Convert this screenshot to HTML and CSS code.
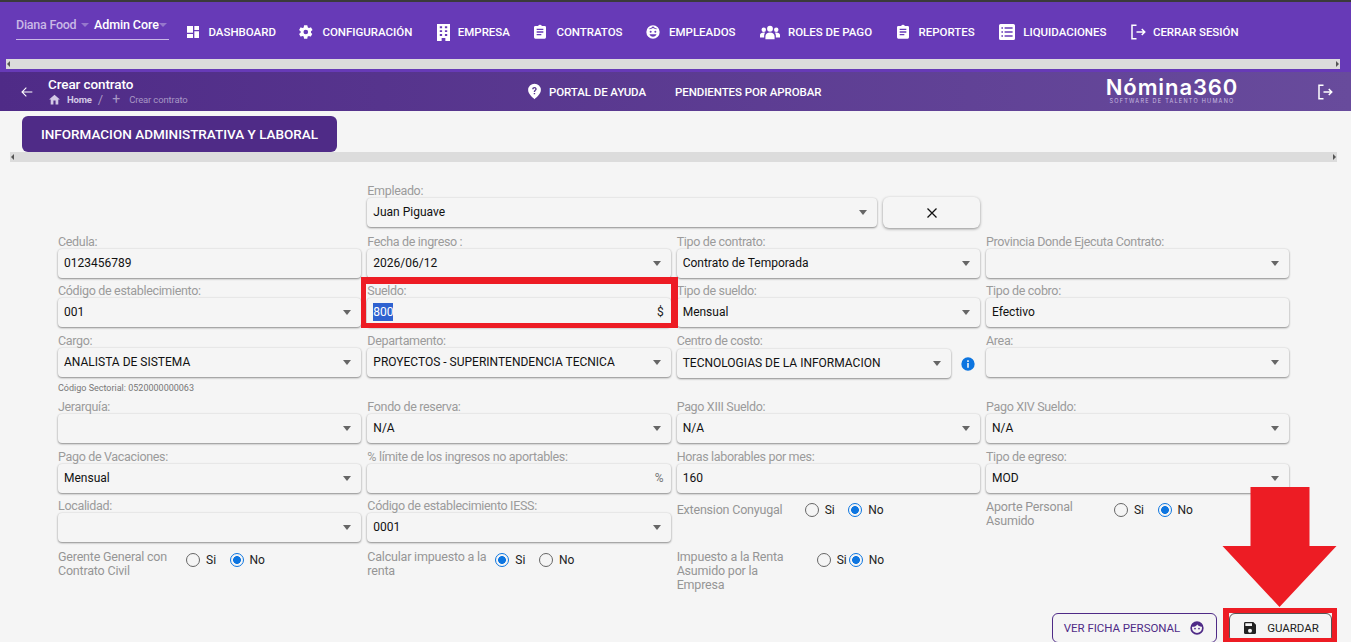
FILE: index.html
```html
<!DOCTYPE html>
<html lang="es">
<head>
<meta charset="utf-8">
<title>Crear contrato</title>
<link rel="stylesheet" href="styles.css">
</head>
<body>
<header class="topbar">
  <nav class="topnav">
    <div class="company">
      <span class="company-a">Diana Food <i class="caret caret-dim"></i></span>
      <span class="company-b">Admin Core<i class="caret caret-dim tight"></i></span>
    </div>
    <a class="navitem"><svg viewBox="0 0 24 24" class="ic"><path d="M3 3h9v10H3zM14 3h7v6h-7zM14 11h7v10h-7zM3 15h9v6H3z"/></svg>DASHBOARD</a>
    <a class="navitem"><svg viewBox="0 0 24 24" class="ic"><path d="M19.4 13c.1-.3.1-.7.1-1s0-.7-.1-1l2.100-1.600c.2-.2.2-.4.1-.6l-2-3.500c-.1-.2-.4-.3-.6-.2l-2.500 1c-.5-.4-1.100-.7-1.700-1L14 2.400c0-.2-.2-.4-.5-.4h-4c-.2 0-.4.2-.5.400l-.4 2.700c-.6.2-1.100.6-1.700 1l-2.500-1c-.2-.1-.5 0-.6.2l-2 3.500c-.1.2-.1.4.1.600L4 11c0 .3-.1.700-.1 1s0 .7.1 1l-2.100 1.600c-.2.2-.2.4-.1.6l2 3.500c.1.2.4.3.6.2l2.500-1c.5.4 1.100.7 1.700 1l.4 2.700c0 .2.2.4.5.4h4c.2 0 .4-.2.5-.4l.4-2.700c.6-.2 1.100-.6 1.700-1l2.500 1c.2.1.5 0 .6-.2l2-3.500c.1-.2.1-.4-.1-.6zM11.700 15.500a3.500 3.500 0 1 1 0-7 3.500 3.500 0 0 1 0 7z"/></svg>CONFIGURACIÓN</a>
    <a class="navitem"><svg viewBox="5 1 14 22" preserveAspectRatio="none" class="ic ic-tall"><path fill-rule="evenodd" d="M5 1h14v22h-5v-4h-4v4H5zM8 4v2.500h2.500V4zM13.500 4v2.500H16V4zM8 9v2.500h2.500V9zM13.500 9v2.500H16V9zM8 14v2.500h2.500V14zM13.500 14v2.500H16V14z"/></svg>EMPRESA</a>
    <a class="navitem"><svg viewBox="0 0 24 24" class="ic"><path fill-rule="evenodd" d="M5 3h4.200a3 3 0 0 1 5.600 0H19a2 2 0 0 1 2 2v15a2 2 0 0 1-2 2H5a2 2 0 0 1-2-2V5a2 2 0 0 1 2-2zM7 7v2h10V7zM7 11v2h10v-2zM7 15v2h7v-2z"/></svg>CONTRATOS</a>
    <a class="navitem"><svg viewBox="0 0 24 24" class="ic"><path fill-rule="evenodd" d="M12 2a10 10 0 1 0 0 20 10 10 0 0 0 0-20zM8.500 10a1.500 1.500 0 1 1 0 3 1.500 1.500 0 0 1 0-3zM15.500 10a1.500 1.500 0 1 1 0 3 1.500 1.500 0 0 1 0-3zM12 19c-2.500 0-4.500-1.500-5.300-3.500h10.600C16.500 17.500 14.500 19 12 19zM12 3.500c2 2 4 3.500 7 4-3 .5-5 0-7-1.500-2 1.500-4 2-7 1.500 3-.5 5-2 7-4z"/></svg>EMPLEADOS</a>
    <a class="navitem"><svg viewBox="0 3 24 18" class="ic ic-wide"><path d="M12 4a3.500 3.500 0 1 1 0 7 3.500 3.500 0 0 1 0-7zM4.500 6a2.700 2.700 0 1 1 0 5.400 2.700 2.700 0 0 1 0-5.400zM19.500 6a2.700 2.700 0 1 1 0 5.400 2.700 2.700 0 0 1 0-5.400zM6.500 20v-3.500c0-2.500 2.500-4.500 5.500-4.500s5.500 2 5.500 4.500V20zM0 18v-3c0-1.700 1.800-3 4.500-3 .6 0 1.100.1 1.600.2-.7 1-1.100 2.100-1.100 3.300V18zM24 18v-3c0-1.700-1.800-3-4.500-3-.6 0-1.100.1-1.600.2.700 1 1.100 2.100 1.100 3.300V18z"/></svg>ROLES DE PAGO</a>
    <a class="navitem"><svg viewBox="0 0 24 24" class="ic"><path fill-rule="evenodd" d="M5 3h4.200a3 3 0 0 1 5.600 0H19a2 2 0 0 1 2 2v15a2 2 0 0 1-2 2H5a2 2 0 0 1-2-2V5a2 2 0 0 1 2-2zM7 7v2h10V7zM7 11v2h10v-2zM7 15v2h7v-2z"/></svg>REPORTES</a>
    <a class="navitem"><svg viewBox="2 2 20 20" class="ic ic-list"><path fill-rule="evenodd" d="M4 2h16a2 2 0 0 1 2 2v16a2 2 0 0 1-2 2H4a2 2 0 0 1-2-2V4a2 2 0 0 1 2-2zM5 6v2h2V6zM9 6v2h10V6zM5 11v2h2v-2zM9 11v2h10v-2zM5 16v2h2v-2zM9 16v2h10v-2z"/></svg>LIQUIDACIONES</a>
    <a class="navitem"><svg viewBox="0 0 24 24" class="ic ic-line ic-out"><path d="M10 3H4v18h6M10 12h11M17 8l4 4-4 4"/></svg>CERRAR SESIÓN</a>
  </nav>
  <div class="hscroll hscroll-top"><i class="arr arr-l"></i><i class="arr arr-r"></i></div>
</header>

<section class="subbar">
  <svg viewBox="0 0 24 24" class="back"><path d="M20 12H5M11 5.500L4.500 12l6.500 6.500"/></svg>
  <div class="crumbs">
    <div class="crumb-title">Crear contrato</div>
    <div class="crumb-path">
      <svg viewBox="0 0 24 24" class="home"><path d="M10 21v-7h4v7h5v-9h3L12 3 2 12h3v9z"/></svg>
      <b>Home</b><span class="sep">/</span><span class="plus">+</span><span class="cur">Crear contrato</span>
    </div>
  </div>
  <div class="sublinks">
    <a class="sublink"><svg viewBox="0 0 24 24" class="help"><path fill-rule="evenodd" d="M12 1a9 9 0 0 0-9 9c0 5.500 6 10 9 13 3-3 9-7.500 9-13a9 9 0 0 0-9-9zM12.900 16h-2v-2h2zM14.800 9.800c-.5.700-1.900 1.300-1.900 3h-2c0-2.500 2-3 2.200-4 .1-.7-.4-1.300-1.100-1.300-.7 0-1.200.5-1.300 1.200H8.700C8.800 7 10.100 5.700 12 5.700c2.300 0 3.800 2.200 2.800 4.100z"/></svg>PORTAL DE AYUDA</a>
    <a class="sublink">PENDIENTES POR APROBAR</a>
  </div>
  <div class="logo">
    <div class="logo-main">Nómina360</div>
    <div class="logo-sub">SOFTWARE DE TALENTO HUMANO</div>
  </div>
  <svg viewBox="0 0 24 24" class="ic-line exit"><path d="M10 3H4v18h6M10 12h11M17 8l4 4-4 4"/></svg>
</section>

<main class="content">
  <div class="tab">INFORMACION ADMINISTRATIVA Y LABORAL</div>
  <div class="hscroll hscroll-tab"><i class="arr arr-l"></i><i class="arr arr-r"></i></div>

  <form class="form">
    <div class="cell"></div>
    <div class="cell cell-wide"><label>Empleado:</label>
      <div class="with-btn">
        <div class="ctl"><span>Juan Piguave</span><i class="sel"></i></div>
        <button type="button" class="xbtn"><svg viewBox="0 0 24 24"><path d="M6 6l12 12M18 6L6 18"/></svg></button>
      </div>
    </div>
    <div class="cell"></div>

    <div class="cell"><label>Cedula:</label><div class="ctl"><span>0123456789</span></div></div>
    <div class="cell"><label>Fecha de ingreso :</label><div class="ctl"><span>2026/06/12</span><i class="sel"></i></div></div>
    <div class="cell"><label>Tipo de contrato:</label><div class="ctl"><span>Contrato de Temporada</span><i class="sel"></i></div></div>
    <div class="cell"><label>Provincia Donde Ejecuta Contrato:</label><div class="ctl"><span></span><i class="sel"></i></div></div>

    <div class="cell"><label>Código de establecimiento:</label><div class="ctl"><span>001</span><i class="sel"></i></div></div>
    <div class="cell"><label>Sueldo:</label><div class="ctl"><span class="picked">800</span><em class="suffix">$</em></div></div>
    <div class="cell"><label>Tipo de sueldo:</label><div class="ctl"><span>Mensual</span><i class="sel"></i></div></div>
    <div class="cell"><label>Tipo de cobro:</label><div class="ctl"><span>Efectivo</span></div></div>

    <div class="cell"><label>Cargo:</label><div class="ctl"><span>ANALISTA DE SISTEMA</span><i class="sel"></i></div><small>Código Sectorial: 0520000000063</small></div>
    <div class="cell"><label>Departamento:</label><div class="ctl"><span>PROYECTOS - SUPERINTENDENCIA TECNICA</span><i class="sel"></i></div></div>
    <div class="cell"><label>Centro de costo:</label>
      <div class="with-info">
        <div class="ctl"><span>TECNOLOGIAS DE LA INFORMACION</span><i class="sel"></i></div>
        <svg viewBox="0 0 24 24" class="info"><path fill-rule="evenodd" d="M12 2a10 10 0 1 0 0 20 10 10 0 0 0 0-20zM13.200 17.500h-2.400v-7h2.400zM13.200 9h-2.400V6.500h2.400z"/></svg>
      </div>
    </div>
    <div class="cell"><label>Area:</label><div class="ctl"><span></span><i class="sel"></i></div></div>

    <div class="cell"><label>Jerarquía:</label><div class="ctl"><span></span><i class="sel"></i></div></div>
    <div class="cell"><label>Fondo de reserva:</label><div class="ctl"><span>N/A</span><i class="sel"></i></div></div>
    <div class="cell"><label>Pago XIII Sueldo:</label><div class="ctl"><span>N/A</span><i class="sel"></i></div></div>
    <div class="cell"><label>Pago XIV Sueldo:</label><div class="ctl"><span>N/A</span><i class="sel"></i></div></div>

    <div class="cell"><label>Pago de Vacaciones:</label><div class="ctl"><span>Mensual</span><i class="sel"></i></div></div>
    <div class="cell"><label>% límite de los ingresos no aportables:</label><div class="ctl"><span></span><em class="suffix dim">%</em></div></div>
    <div class="cell"><label>Horas laborables por mes:</label><div class="ctl"><span>160</span></div></div>
    <div class="cell"><label>Tipo de egreso:</label><div class="ctl"><span>MOD</span><i class="sel"></i></div></div>

    <div class="cell"><label>Localidad:</label><div class="ctl"><span></span><i class="sel"></i></div></div>
    <div class="cell"><label>Código de establecimiento IESS:</label><div class="ctl"><span>0001</span><i class="sel"></i></div></div>
    <div class="cell radio-cell r-ext">
      <div class="rlabel r128 single">Extension Conyugal</div>
      <div class="radios"><span class="rd"></span><span class="rt">Si</span><span class="rd on"></span><span class="rt">No</span></div>
    </div>
    <div class="cell radio-cell r-ext">
      <div class="rlabel r128 nudge">Aporte Personal Asumido</div>
      <div class="radios"><span class="rd"></span><span class="rt">Si</span><span class="rd on"></span><span class="rt">No</span></div>
    </div>

    <div class="cell radio-cell">
      <div class="rlabel r128">Gerente General con Contrato Civil</div>
      <div class="radios"><span class="rd"></span><span class="rt">Si</span><span class="rd on"></span><span class="rt">No</span></div>
    </div>
    <div class="cell radio-cell">
      <div class="rlabel r128">Calcular impuesto a la renta</div>
      <div class="radios"><span class="rd on"></span><span class="rt">Si</span><span class="rd"></span><span class="rt">No</span></div>
    </div>
    <div class="cell radio-cell">
      <div class="rlabel r140">Impuesto a la Renta Asumido por la Empresa</div>
      <div class="radios"><span class="rd"></span><span class="rt tightrt">Si</span><span class="rd on"></span><span class="rt">No</span></div>
    </div>
    <div class="cell"></div>
  </form>

  <div class="actions">
    <button type="button" class="btn btn-ficha">VER FICHA PERSONAL
      <svg viewBox="0 0 24 24" class="face"><path fill-rule="evenodd" d="M12 2a10 10 0 1 0 0 20 10 10 0 0 0 0-20zM12 19.500A7.500 7.500 0 0 1 4.500 12c0-.7.100-1.300.3-1.900 3.500.2 6-1 7.700-3.400 1.400 2 3.500 3.200 6.700 3.400.2.600.3 1.200.3 1.900a7.500 7.500 0 0 1-7.500 7.500zM9 11.500a1.300 1.300 0 1 1 0 2.600 1.300 1.300 0 0 1 0-2.600zM15 11.500a1.300 1.300 0 1 1 0 2.600 1.300 1.300 0 0 1 0-2.600z"/></svg>
    </button>
    <button type="button" class="btn btn-save">
      <svg viewBox="0 0 24 24" class="disk"><path fill-rule="evenodd" d="M17 3H5a2 2 0 0 0-2 2v14a2 2 0 0 0 2 2h14a2 2 0 0 0 2-2V7zM12 19a3 3 0 1 1 0-6 3 3 0 0 1 0 6zM15 9H5V5h10z"/></svg>GUARDAR</button>
  </div>
</main>

<div class="mark mark-sueldo"></div>
<div class="mark mark-save"></div>
<svg class="arrow" viewBox="0 0 114 120"><path d="M28 0h59v59h27L57 120 0 59h28z"/></svg>
</body>
</html>
```
FILE: styles.css
```css
* { box-sizing: border-box; }
html, body { margin: 0; height: 642px; overflow: hidden; }
body { background: #f5f5f5; font-family: Roboto, "Liberation Sans", sans-serif; color: #111; }

.topbar { height: 72px; background: #673ab7; border-top: 2px solid #3a3a3a; }
.topnav { height: 57px; display: flex; align-items: flex-start; padding: 14px 0 0 16px; color: #fff; }
.company { display: flex; width: 153px; height: 24px; border-bottom: 1px solid #c9b8e6; font-size: 12.5px; font-weight: 500; line-height: 17px; margin-right: 17.500px; }
.company-a { width: 78px; color: #c9b8e6; letter-spacing: -.25px; white-space: nowrap; }
.company-b { color: #fff; white-space: nowrap; letter-spacing: -.1px; }
.caret { display: inline-block; vertical-align: 2px; margin-left: 2px; border: 4.5px solid transparent; border-top: 4px solid #9678cc; border-bottom: 0; }
.caret.tight { margin-left: 0; }
.navitem { display: flex; align-items: center; height: 28px; margin-top: 2px; margin-right: 24.5px; font-size: 11.500px; font-weight: 500; white-space: nowrap; letter-spacing: -.02px; }
.ic { width: 16px; height: 16px; fill: #fff; margin: 0 8px 0 -2px; flex: none; }
.ic-tall { width: 13px; height: 17px; margin: 0 8px 0 0; }
.ic-wide { width: 20px; height: 15px; margin: 0 8px 0 0; }
.ic-list { width: 16px; height: 16px; margin: 0 8px 0 0; }
.ic-out { width: 18px; height: 18px; margin: 0 6px 0 -2px; }
.ic-line { fill: none; stroke: #fff; stroke-width: 2; }
.hscroll { position: relative; height: 10px; background: #dcdcdc; }
.hscroll-top { margin: 0 11px 0 6px; }
.hscroll-tab { margin: 0 14px 0 10px; }
.arr { position: absolute; top: 2px; border: 3px solid transparent; }
.arr-l { left: 1px; border-right: 3px solid #555; border-left: 0; }
.arr-r { right: 1px; border-left: 3px solid #555; border-right: 0; }

.subbar { height: 39px; display: flex; align-items: center; color: #fff; background: linear-gradient(90deg, #4f2b87 0%, #684b9c 100%); }
.back { width: 16px; height: 16px; margin-left: 19px; fill: none; stroke: #fff; stroke-width: 1.6; }
.crumbs { margin-left: 13px; width: 210px; }
.crumb-title { font-size: 13.500px; font-weight: 500; line-height: 16px; margin-top: -1px; letter-spacing: -.1px; }
.crumb-path { display: flex; align-items: center; height: 15px; font-size: 9.500px; color: #a796c4; }
.crumb-path b { color: #d3c8e5; font-weight: 700; margin-left: 6px; letter-spacing: -.15px; }
.home { width: 13px; height: 13px; fill: #d3c8e5; }
.sep { margin: 0 9px 0 6px; font-size: 13px; }
.plus { font-size: 14px; margin-right: 9px; }
.cur { letter-spacing: -.15px; }
.sublinks { display: flex; align-items: center; margin-left: 269px; width: 578px; }
.sublink { display: flex; align-items: center; font-size: 11.500px; font-weight: 500; white-space: nowrap; margin-right: 29px; letter-spacing: -.08px; }
.help { width: 17px; height: 17px; fill: #fff; margin: 0 6px 0 -1px; }
.logo { width: 134px; text-align: center; }
.logo-main { font-family: Inter, sans-serif; font-size: 22px; font-weight: 600; line-height: 20px; letter-spacing: .9px; margin-top: -2px; white-space: nowrap; }
.logo-sub { font-family: Inter, sans-serif; font-size: 5.500px; line-height: 7px; letter-spacing: 1.250px; color: #c9bde0; white-space: nowrap; margin-top: 1px; }
.exit { width: 18px; height: 18px; margin-left: 77px; stroke-width: 2; }

.content { display: block; }
.tab { width: 315px; height: 36px; margin: 5px 0 0 22px; border-radius: 6px; background: #4f2b87; color: #fff; font-size: 13.500px; font-weight: 500; line-height: 37px; text-align: center; }

.form { display: grid; margin: 21px 0 0 58px; grid-template-columns: repeat(4, 303.330px); column-gap: 6px; grid-template-rows: 51px 49px 50px 66px 50px 49px 52px 60px; width: 1232px; }
.cell { min-width: 0; }
.cell-wide { grid-column: span 2; }
.cell label { display: block; height: 15px; font-size: 12.500px; line-height: 15px; color: #9b9b9b; white-space: nowrap; letter-spacing: -.33px; }
.ctl { display: flex; align-items: center; height: 29px; padding: 0 6px 1px; background: #f5f5f5; border-radius: 4px; font-size: 12px; color: #111; box-shadow: 0 1px 2px #8f8f8f, 0 0 2px #d8d8d8; }
.ctl span { flex: 1; white-space: nowrap; }
.sel { flex: none; margin-right: 4px; border: 4px solid transparent; border-top: 5px solid #666; border-bottom: 0; border-left-width: 4.500px; border-right-width: 4.500px; }
.suffix { font-style: normal; font-size: 12px; color: #222; margin-left: auto; margin-right: 1px; }
.suffix.dim { color: #777; }
.ctl .picked { flex: none; width: 20px; height: 18px; line-height: 18px; background: #2f62d0; color: #fff; }
small { display: block; margin-top: 6px; font-size: 9px; line-height: 11px; color: #777; }
.with-btn { display: flex; width: 613px; }
.with-btn .ctl { width: 510px; flex: none; }
.xbtn { width: 97px; height: 31px; margin: -1px 0 0 6px; padding: 0; border: 0; border-radius: 6px; background: #f5f5f5; box-shadow: 0 1px 3px #8f8f8f; }
.xbtn svg { width: 18px; height: 18px; fill: none; stroke: #111; stroke-width: 1.700; vertical-align: middle; }
.with-info { display: flex; align-items: center; margin-top: 1px; }
.with-info .ctl { width: 274px; flex: none; }
.info { width: 16px; height: 16px; margin-left: 9px; fill: #0d75e0; }

.radio-cell { display: flex; align-items: flex-start; }
.rlabel { font-size: 12.500px; line-height: 14px; color: #959595; flex: none; letter-spacing: -.2px; }
.r128 { width: 128px; padding-right: 6px; }
.r140 { width: 140px; padding-right: 24px; }
.single { padding-top: 5px; }
.nudge { padding-top: 2px; }
.radios { display: flex; align-items: center; height: 22px; margin-top: -1px; font-size: 12px; color: #222; }
.r-ext .radios { margin-top: 1px; }
.rd { width: 14px; height: 14px; border-radius: 50%; border: 1.500px solid #666; flex: none; }
.rd.on { border-color: #0d75e0; background: radial-gradient(circle, #0d75e0 0 3.600px, transparent 4.200px); }
.rt { margin: 0 13.500px 0 6px; }
.rt.tightrt { margin-right: 2px; }

.actions { display: flex; justify-content: flex-end; margin: 3px 19px 0 0; gap: 12px; }
.btn { display: flex; align-items: center; justify-content: center; height: 30px; padding: 0; background: #f5f5f5; border-radius: 6px; font-family: Roboto, sans-serif; font-size: 11.500px; font-weight: 400; letter-spacing: -.03px; }
.btn-ficha { width: 165px; border: 1px solid #4f2b87; color: #4f2b87; }
.btn-save { width: 103px; border: 1px solid #555; color: #222; }
.face { width: 16px; height: 16px; margin-left: 9px; fill: #4f2b87; }
.disk { width: 16px; height: 16px; margin-right: 9px; fill: #222; }

.mark { position: absolute; border: 5px solid #ed1c24; }
.mark-sueldo { left: 361px; top: 277px; width: 317px; height: 51px; border-width: 7px 7px 5px 5px; }
.mark-save { left: 1223px; top: 608px; width: 114px; height: 34px; border-width: 5px 5px 4px 6px; }
.arrow { position: absolute; left: 1222px; top: 487px; width: 115px; height: 120px; fill: #ed1c24; }
```
